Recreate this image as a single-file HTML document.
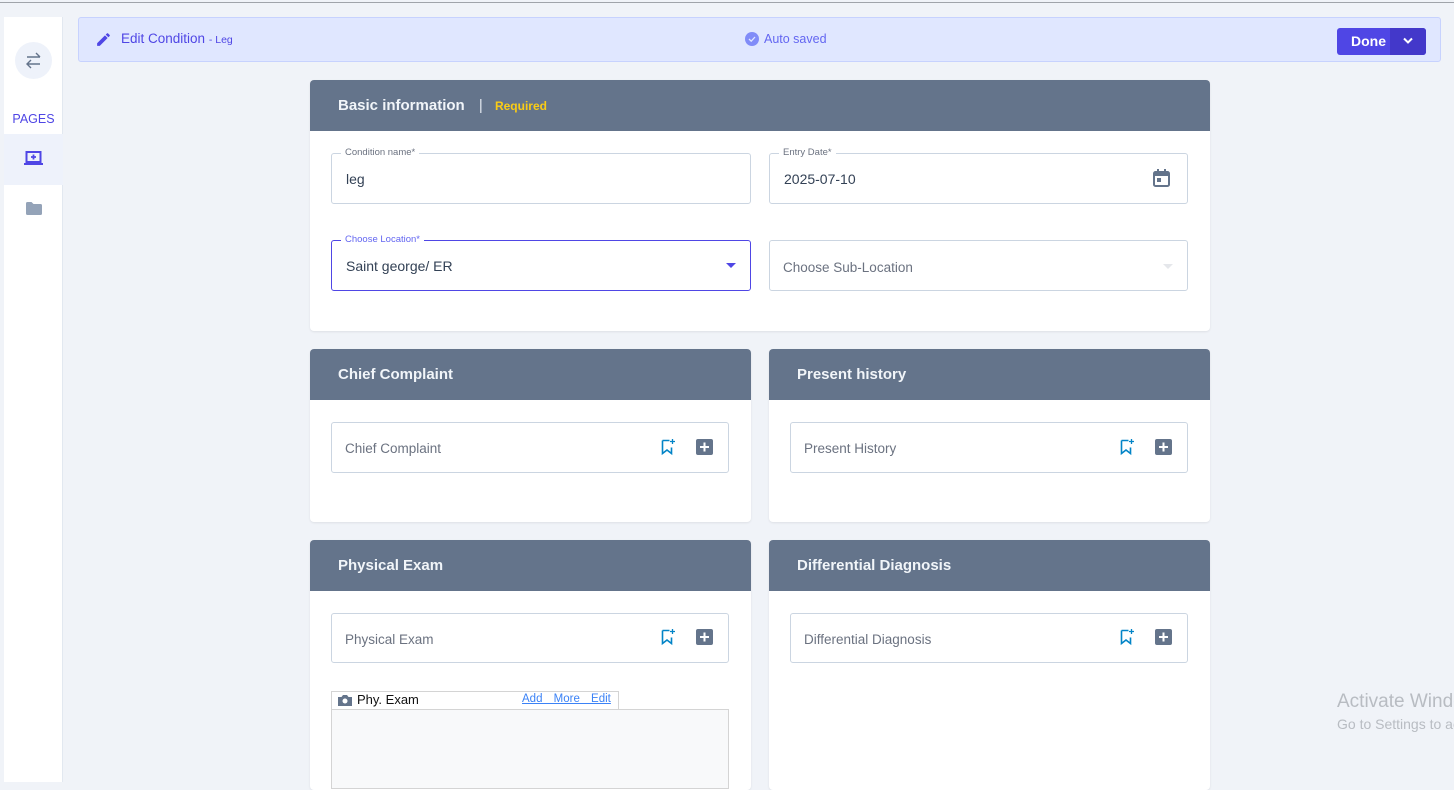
<!DOCTYPE html>
<html><head><style>
*{box-sizing:border-box;margin:0;padding:0}
body{width:1454px;height:782px;overflow:hidden;background:#f0f3f8;font-family:"Liberation Sans",sans-serif;position:relative}
.a{position:absolute}
.card{position:absolute;background:#fff;border-radius:4px;box-shadow:0 1px 2px rgba(0,0,0,.08);overflow:hidden}
.hd{height:51px;background:#64748b;color:#f1f5f9;font-weight:bold;font-size:15px;padding:0 28px;line-height:51px}
.fld{position:absolute;border:1px solid #cbd5e1;border-radius:3px;background:#fff;font-size:14px;color:#334155}
.lbl{position:absolute;top:-7px;left:9px;background:#fff;padding:0 4px;font-size:9.5px;color:#6b7280}
.ph{color:#6b7280;font-size:13.5px}
</style></head><body>
<div class="a" style="left:0;top:0;width:1454px;height:3px;border-bottom:1px solid #a0a4aa;background:#f0f3f8"></div>
<!-- sidebar -->
<div class="a" style="left:4px;top:17px;width:59px;height:765px;background:#fff;border-right:1px solid #e2e8f0"></div>
<div class="a" style="left:15px;top:42px;width:37px;height:37px;border-radius:50%;background:#eef2fa"></div>
<svg class="a" style="left:24px;top:51px" width="19" height="19" viewBox="0 0 19 19" fill="none" stroke="#64748b" stroke-width="1.4"><path d="M3 6h13M12 2l4 4M16 13H3M7 9l-4 4 4 4"/></svg>
<div class="a" style="left:4px;top:112px;width:59px;text-align:center;font-size:12.5px;color:#4f46e5">PAGES</div>
<div class="a" style="left:4px;top:134px;width:59px;height:51px;background:#eef2fb"></div>
<svg class="a" style="left:24px;top:151px" width="19" height="15" viewBox="0 0 19 15"><rect x="2.5" y="1" width="14" height="10" fill="none" stroke="#4f46e5" stroke-width="2"/><path d="M9.5 3.5v5M7 6h5" stroke="#4f46e5" stroke-width="1.8"/><rect x="0" y="12" width="19" height="2" fill="#4f46e5"/></svg>
<svg class="a" style="left:26px;top:202px" width="16" height="13" viewBox="0 0 16 13"><path d="M0 1.5Q0 0 1.5 0h4l2 2h7Q16 2 16 3.5v8Q16 13 14.5 13h-13Q0 13 0 11.5z" fill="#94a3b8"/></svg>
<!-- top bar -->
<div class="a" style="left:78px;top:17px;width:1363px;height:45px;background:#e0e7ff;border:1px solid #c7d2fe;border-radius:3px"></div>
<svg class="a" style="left:95px;top:31px" width="17" height="17" viewBox="0 0 24 24"><path d="M3 17.25V21h3.75L17.81 9.94l-3.75-3.75zM20.71 7.04a1 1 0 000-1.41l-2.34-2.34a1 1 0 00-1.41 0l-1.83 1.83 3.75 3.75z" fill="#4f46e5"/></svg>
<div class="a" style="left:121px;top:31px;font-size:13.5px;color:#4f46e5">Edit Condition <span style="font-size:10.5px">- Leg</span></div>
<div class="a" style="left:745px;top:32px;width:14px;height:14px;border-radius:50%;background:#818cf8"></div>
<svg class="a" style="left:745px;top:32px" width="14" height="14"><path d="M4 7l2.2 2.2L10 5" stroke="#e0e7ff" stroke-width="1.3" fill="none"/></svg>
<div class="a" style="left:764px;top:32px;font-size:12.5px;color:#6366f1">Auto saved</div>
<div class="a" style="left:1337px;top:28px;width:89px;height:27px;background:#4f46e5;border-radius:3px"></div>
<div class="a" style="left:1390px;top:28px;width:36px;height:27px;background:#4338ca;border-radius:0 3px 3px 0"></div>
<div class="a" style="left:1351px;top:33px;font-size:14px;color:#fff;font-weight:bold">Done</div>
<svg class="a" style="left:1402px;top:36px" width="12" height="10"><path d="M2 2.5l4 4 4-4" stroke="#fff" stroke-width="2" fill="none"/></svg>
<!-- basic info -->
<div class="card" style="left:310px;top:80px;width:900px;height:251px">
<div class="hd">Basic information <span style="color:#e2e8f0;font-weight:normal;margin:0 8px 0 10px">|</span> <span style="color:#facc15;font-size:12px">Required</span></div>
</div>
<div class="fld" style="left:331px;top:153px;width:420px;height:51px"><span class="lbl">Condition name*</span><div style="position:absolute;left:14px;top:17px">leg</div></div>
<div class="fld" style="left:769px;top:153px;width:419px;height:51px"><span class="lbl">Entry Date*</span><div style="position:absolute;left:14px;top:17px">2025-07-10</div>
<svg style="position:absolute;right:17px;top:15px" width="17" height="18" viewBox="0 0 17 18"><rect x="1" y="3" width="15" height="14" rx="1.5" fill="none" stroke="#64748b" stroke-width="2"/><rect x="1" y="3" width="15" height="4" fill="#64748b"/><rect x="4" y="0" width="2" height="4" fill="#64748b"/><rect x="11" y="0" width="2" height="4" fill="#64748b"/><rect x="4" y="9" width="4" height="4" fill="#64748b"/></svg></div>
<div class="fld" style="left:331px;top:240px;width:420px;height:51px;border-color:#4f46e5"><span class="lbl" style="color:#6366f1">Choose Location*</span><div style="position:absolute;left:14px;top:17px">Saint george/ ER</div>
<svg style="position:absolute;right:14px;top:22px" width="10" height="6"><path d="M0 0h10L5 5z" fill="#4f46e5"/></svg></div>
<div class="fld" style="left:769px;top:240px;width:419px;height:51px"><div class="ph" style="position:absolute;left:13px;top:19px">Choose Sub-Location</div>
<svg style="position:absolute;right:14px;top:23px" width="10" height="6"><path d="M0 0h10L5 5z" fill="#e5e7eb"/></svg></div>
<!-- section cards -->
<div class="card" style="left:310px;top:349px;width:441px;height:173px"><div class="hd">Chief Complaint</div></div>
<div class="card" style="left:769px;top:349px;width:441px;height:173px"><div class="hd">Present history</div></div>
<div class="card" style="left:310px;top:540px;width:441px;height:250px"><div class="hd">Physical Exam</div></div>
<div class="card" style="left:769px;top:540px;width:441px;height:250px"><div class="hd">Differential Diagnosis</div></div>

<div class="fld" style="left:331px;top:422px;width:398px;height:51px"><div class="ph" style="position:absolute;left:13px;top:18px">Chief Complaint</div></div>
<div class="fld" style="left:790px;top:422px;width:398px;height:51px"><div class="ph" style="position:absolute;left:13px;top:18px">Present History</div></div>
<div class="fld" style="left:331px;top:613px;width:398px;height:50px"><div class="ph" style="position:absolute;left:13px;top:18px">Physical Exam</div></div>
<div class="fld" style="left:790px;top:613px;width:398px;height:50px"><div class="ph" style="position:absolute;left:13px;top:18px">Differential Diagnosis</div></div>

<svg width="0" height="0" style="position:absolute"><defs>
<g id="ic"><path d="M1.5 1.5h7M1.5 1.5v13l4.5-3.5 4.5 3.5v-6" stroke="#0284c7" stroke-width="1.6" fill="none"/><path d="M11.5 0v5M9 2.5h5" stroke="#0284c7" stroke-width="1.3"/><rect x="35" y="0" width="17" height="16" rx="2" fill="#64748b"/><path d="M43.5 3.5v9M39 8h9" stroke="#fff" stroke-width="2"/></g></defs></svg>
<svg class="a" style="left:661px;top:439px" width="55" height="17"><use href="#ic"/></svg>
<svg class="a" style="left:1120px;top:439px" width="55" height="17"><use href="#ic"/></svg>
<svg class="a" style="left:661px;top:629px" width="55" height="17"><use href="#ic"/></svg>
<svg class="a" style="left:1120px;top:629px" width="55" height="17"><use href="#ic"/></svg>

<!-- phy exam widget -->
<div class="a" style="left:331px;top:691px;width:288px;height:19px;border:1px solid #d4d4d4;background:#fff"></div>
<svg class="a" style="left:338px;top:694px" width="14" height="12" viewBox="0 0 14 12"><path d="M0 3h3.5l1.5-2h4l1.5 2H14v9H0z" fill="#64748b"/><circle cx="7" cy="7" r="2.5" fill="#fff"/></svg>
<div class="a" style="left:357px;top:692px;font-size:13px;color:#111">Phy. Exam</div>
<div class="a" style="left:522px;top:693px;font-size:11.5px;color:#3b82f6;text-decoration:underline;word-spacing:8px">Add More Edit</div>
<div class="a" style="left:331px;top:709px;width:398px;height:80px;border:1px solid #d4d4d4;background:#f8f9fa"></div>

<div class="a" style="left:1337px;top:691px;font-size:19px;color:#b8bcc2;white-space:nowrap">Activate Windows</div>
<div class="a" style="left:1337px;top:716px;font-size:14px;color:#b8bcc2;white-space:nowrap">Go to Settings to activate</div>
</body></html>
